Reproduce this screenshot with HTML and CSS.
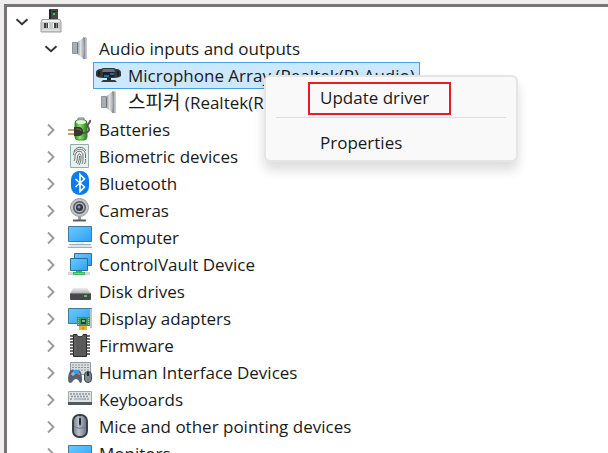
FILE: index.html
```html
<!DOCTYPE html>
<html lang="en">
<head>
<meta charset="utf-8">
<meta name="viewport" content="width=device-width, initial-scale=1">
<title>Device Manager</title>
<link rel="stylesheet" href="styles.css">
</head>
<body>
<svg class="defs" width="0" height="0" aria-hidden="true">
  <defs>
    <linearGradient id="screen" x1="0" y1="0" x2="1" y2="1"><stop offset="0" stop-color="#6cc8ff"/><stop offset=".5" stop-color="#4db6fa"/><stop offset="1" stop-color="#2f9df0"/></linearGradient>
    <linearGradient id="metal"><stop offset="0" stop-color="#8a9096"/><stop offset=".5" stop-color="#dfe2e5"/><stop offset="1" stop-color="#a3a8ad"/></linearGradient>
    <linearGradient id="cell"><stop offset="0" stop-color="#2c8b22"/><stop offset=".4" stop-color="#8be46c"/><stop offset="1" stop-color="#23801b"/></linearGradient>
    <linearGradient id="mousebody"><stop offset="0" stop-color="#737d8a"/><stop offset=".4" stop-color="#b9c2ce"/><stop offset="1" stop-color="#66707d"/></linearGradient>
    <linearGradient id="drivetop" x1="0" y1="0" x2="0" y2="1"><stop offset="0" stop-color="#eeeeef"/><stop offset="1" stop-color="#a9abad"/></linearGradient>
  </defs>
  <symbol id="open" viewBox="0 0 14 8"><path d="M1.500 1.200 7 6.300l5.500-5.100" fill="none" stroke="#333" stroke-width="1.900"/></symbol>
  <symbol id="closed" viewBox="0 0 8 14"><path d="M1 1.500 6.500 7 1 12.500" fill="none" stroke="#9b9b9b" stroke-width="1.900"/></symbol>
  <symbol id="speaker" viewBox="0 0 28 25">
    <path d="M7.500 6.500h5v11h-5z" fill="#a9aeb3" stroke="#90959a"/>
    <path d="M12 6.500 19 1v22.500L12 17.500z" fill="url(#metal)"/>
    <path d="M12.500 7v10.500" stroke="#6f757c" fill="none"/>
    <path d="M18 1.500h3.500v21.500H18c1.500-7 1.500-14.500 0-21.500z" fill="#8d9298"/>
    <path d="M20.500 1.500v21.500" stroke="#b4b9bd"/>
  </symbol>
  <symbol id="monitor" viewBox="0 0 28 25">
    <path d="M3.500 1.500h23v15h-23z" fill="url(#screen)" stroke="#3e7c9f"/>
    <path d="M11 17h8v2h-8z" fill="#e9edf0"/>
    <path d="M5 20h20l2 2H3z" fill="#dce5eb"/><path d="M4 19.500h22M3 22.500h24" stroke="#9db0be"/>
  </symbol>
</svg>

<main class="pane">
  <ul class="tree" aria-label="Devices">
    <li>
      <div class="row">
        <button class="toggle" aria-label="Collapse computer"><svg class="down"><use href="#open"/></svg></button>
        <span class="item"><svg class="icon" viewBox="0 0 28 25">
          <path d="M13 0h9v12h-9z" fill="#444746"/><path d="M13 1h2v11h-2z" fill="#222"/><path d="M16 2.500h5" stroke="#272b29"/><path d="M17 4h2v2h-2z" fill="#43c955"/>
          <path d="M6 10.500h18l1 3v9.500H5v-9.500z" fill="#c9cacb" stroke="#a1a1a1"/><path d="M7 11h16l1 2H6z" fill="#f2f2f2"/><path d="M6 20h18v2H6z" fill="#dedede"/>
          <path d="M8 14h4v5H8zM18 14h4v5h-4z" fill="#3f3f3f"/><path d="M10 14h1v5h-1zM20 14h1v5h-1z" fill="#888"/><path d="M12 14h1v5h-1zM17 14h1v5h-1z" fill="#fff"/>
        </svg></span>
      </div>
      <ul>
        <li>
          <div class="row">
            <button class="toggle" aria-label="Collapse Audio inputs and outputs"><svg class="down"><use href="#open"/></svg></button>
            <span class="item"><svg class="icon"><use href="#speaker"/></svg><span>Audio inputs and outputs</span></span>
          </div>
          <ul>
            <li>
              <div class="row leaf">
                <span class="item selected"><svg class="icon" viewBox="0 0 28 25">
                  <path d="M2 10c0-3 2-4 5-4l2-1h11l2 1c3 0 5 1 5 4v3c-1 1-4 2-7 2H9c-3 0-6-1-7-2z" fill="#34373a"/>
                  <path d="M9 6h11l1 3H8z" fill="#6b7176"/><path d="M9 9h11v5H9z" fill="#14202a"/><path d="M10 13h5m1-2h4" stroke="#168bdc" stroke-width="1.500"/><path d="M5 8v5M24 8v5" stroke="#1d1f21" stroke-width="2"/>
                  <path d="M13 15h4v2h-4z" fill="#24282b"/><path d="M9 17h12l2 2H7z" fill="#35393c"/>
                </svg><span>Microphone Array (Realtek(R) Audio)</span></span>
                <div class="menu" role="menu">
                  <button class="command marked" role="menuitem">Update driver</button>
                  <hr>
                  <button class="command" role="menuitem">Properties</button>
                </div>
              </div>
            </li>
            <li><div class="row leaf"><span class="item"><svg class="icon"><use href="#speaker"/></svg><span><span class="hangul" lang="ko">스피커</span> (Realtek(R) Audio)</span></span></div></li>
          </ul>
        </li>
        <li><div class="row">
          <button class="toggle" aria-label="Expand Batteries"><svg class="right"><use href="#closed"/></svg></button>
          <span class="item"><svg class="icon" viewBox="0 0 28 25">
            <path d="M13 1h6v3h-6z" fill="#c8ccc9" stroke="#7b857b"/><rect x="10" y="3" width="12" height="20" rx="3" fill="url(#cell)" stroke="#3b8a30"/><ellipse cx="16" cy="5" rx="5" ry="2" fill="#e4efe0"/>
            <path d="M17 16c7 0 8-3 6-6s3-4 2-7" fill="none" stroke="#5a5550" stroke-width="2"/>
            <path d="M3 13h7M3 17h7" stroke="#c0a469" stroke-width="2"/><path d="M9 10h4c4 0 5 2 5 5s-2 4-5 4H9z" fill="#393632"/><path d="M11 12c3 0 5 0 5 2" stroke="#77716a" fill="none"/>
          </svg><span>Batteries</span></span>
        </div></li>
        <li><div class="row">
          <button class="toggle" aria-label="Expand Biometric devices"><svg class="right"><use href="#closed"/></svg></button>
          <span class="item"><svg class="icon" viewBox="0 0 28 25">
            <path d="M5.500.5h18v23h-18z" fill="#e8f1ef" stroke="#8fb0a9"/>
            <path d="M9 8c1-6 10-6 12-1M8.500 11c0-7 12-8 12 0v3M9 17c2-3 0-6 2-8 2-3 7-2 7 2 0 5 0 7-1 9M11 19c2-4 1-6 2-8s3-1 3 1c0 4 0 6-2 9M14.500 12c0 4-1 6-2 8M20.500 15c0 2 0 3-1 5" fill="none" stroke="#6a6e6d"/>
          </svg><span>Biometric devices</span></span>
        </div></li>
        <li><div class="row">
          <button class="toggle" aria-label="Expand Bluetooth"><svg class="right"><use href="#closed"/></svg></button>
          <span class="item"><svg class="icon" viewBox="0 0 28 25">
            <rect x="6" width="18" height="24" rx="8.500" fill="#087cf0"/><path d="m10.500 8 9 8-4.500 4.500v-17L19.500 8l-9 8" fill="none" stroke="#fff" stroke-width="1.600"/>
          </svg><span>Bluetooth</span></span>
        </div></li>
        <li><div class="row">
          <button class="toggle" aria-label="Expand Cameras"><svg class="right"><use href="#closed"/></svg></button>
          <span class="item"><svg class="icon" viewBox="0 0 28 25">
            <path d="M13 18h3v4h-3z" fill="#9a9da0"/><path d="M8 22.500h13" stroke="#5d6063" stroke-width="2"/>
            <circle cx="14.500" cy="9.500" r="9" fill="#c3c5c7" stroke="#9b9da0"/><circle cx="14.500" cy="9.500" r="6.500" fill="#55585d"/><circle cx="14.500" cy="9.500" r="5" fill="#b1b7bf"/><circle cx="14.500" cy="9.500" r="3.500" fill="#2c3541"/><circle cx="14" cy="9" r="1.500" fill="#6f9cc8"/>
          </svg><span>Cameras</span></span>
        </div></li>
        <li><div class="row">
          <button class="toggle" aria-label="Expand Computer"><svg class="right"><use href="#closed"/></svg></button>
          <span class="item"><svg class="icon"><use href="#monitor"/></svg><span>Computer</span></span>
        </div></li>
        <li><div class="row">
          <button class="toggle" aria-label="Expand ControlVault Device"><svg class="right"><use href="#closed"/></svg></button>
          <span class="item"><svg class="icon" viewBox="0 0 28 25">
            <path d="M9.500 1.500h17v12h-17z" fill="url(#screen)" stroke="#29719b"/><path d="M5.500 6.500h17v12h-17z" fill="url(#screen)" stroke="#29719b"/>
            <path d="M3 20h22v3H3z" fill="#d3d8d6"/><path d="M11 19h6v1h3v3H8v-3h3z" fill="#3dba55"/><path d="M9 21.500h10" stroke="#6bdc72"/>
          </svg><span>ControlVault Device</span></span>
        </div></li>
        <li><div class="row">
          <button class="toggle" aria-label="Expand Disk drives"><svg class="right"><use href="#closed"/></svg></button>
          <span class="item"><svg class="icon" viewBox="0 0 28 25">
            <path d="M8 9h14l4 6H5z" fill="url(#drivetop)"/><rect x="5" y="14" width="21" height="7" rx="1" fill="#46484a"/><path d="M5 14.500h21" stroke="#777a7c"/><path d="M19 16h3v2h-3z" fill="#42d052"/>
          </svg><span>Disk drives</span></span>
        </div></li>
        <li><div class="row">
          <button class="toggle" aria-label="Expand Display adapters"><svg class="right"><use href="#closed"/></svg></button>
          <span class="item"><svg class="icon" viewBox="0 0 28 25">
            <path d="M3.500 2.500h23v15h-23z" fill="url(#screen)" stroke="#3e7c9f"/><path d="M26 3v19" stroke="#b9c5ca" stroke-width="2"/>
            <path d="M12 11h13v9H12z" fill="#409560"/><path d="M16 13h5v5h-5z" fill="#26433a"/><path d="M17 14h3v2h-3z" fill="#8caf9b"/><path d="M13.500 12v7M23.500 12v7" stroke="#8fcf94" stroke-dasharray="1 1"/>
            <path d="M14 20h8v4h-8z" fill="#f2b02a"/><path d="M18 21v3" stroke="#b97c18"/>
          </svg><span>Display adapters</span></span>
        </div></li>
        <li><div class="row">
          <button class="toggle" aria-label="Expand Firmware"><svg class="right"><use href="#closed"/></svg></button>
          <span class="item"><svg class="icon" viewBox="0 0 28 25">
            <path d="M5 3h4M5 6h4M5 9h4M5 12h4M5 15h4M5 18h4M5 21h4M21 3h4M21 6h4M21 9h4M21 12h4M21 15h4M21 18h4M21 21h4" stroke="#6b6b6b" stroke-width="2"/>
            <path d="M8.500 1.500H12c0 3 6 3 6 0h3.500v22h-13z" fill="#595959" stroke="#2b2b2b"/><path d="M10 4v18" stroke="#6b6b6b"/>
          </svg><span>Firmware</span></span>
        </div></li>
        <li><div class="row">
          <button class="toggle" aria-label="Expand Human Interface Devices"><svg class="right"><use href="#closed"/></svg></button>
          <span class="item"><svg class="icon" viewBox="0 0 28 25">
            <path d="M5.500 2.500h20v12h-20z" fill="#d9dddf" stroke="#929ba0"/><path d="M7 5h17M7 7.500h17M7 10h17" stroke="#8b9499" stroke-dasharray="2 1"/>
            <path d="M5 11c2-2 4-1 5 0s3-1 5 0 3 12 1 12-2-4-5-4-3 4-6 4-2-9 0-12z" fill="#596270"/><path d="M8 10h6v4H8z" fill="#339bea"/><path d="M6 14h4M8 12v4" stroke="#c2c7cc"/><path d="M13 13h2v2h-2z" fill="#e86732"/>
            <rect x="19.500" y="11.500" width="7" height="11" rx="3.500" fill="#7d8793" stroke="#3b434d"/><path d="M23 12v4" stroke="#20262d" stroke-width="2"/>
          </svg><span>Human Interface Devices</span></span>
        </div></li>
        <li><div class="row">
          <button class="toggle" aria-label="Expand Keyboards"><svg class="right"><use href="#closed"/></svg></button>
          <span class="item"><svg class="icon" viewBox="0 0 28 25">
            <path d="M3.500 4.500h23v11h-23z" fill="#dfe3e5" stroke="#a0a9ae"/><path d="M3 15h24v3H3z" fill="#505a60"/><path d="M5 7h20M6 9.500h18M5 12h3m11 0h6" stroke="#8e999f" stroke-width="1.500" stroke-dasharray="2 1"/><path d="M9 12h10" stroke="#8e999f"/>
          </svg><span>Keyboards</span></span>
        </div></li>
        <li><div class="row">
          <button class="toggle" aria-label="Expand Mice and other pointing devices"><svg class="right"><use href="#closed"/></svg></button>
          <span class="item"><svg class="icon" viewBox="0 0 28 25">
            <rect x="8" y="1" width="14" height="22" rx="6" fill="url(#mousebody)" stroke="#3a4048" stroke-width="2"/><path d="M9 12c3 3 9 3 12 0M15 2v10" fill="none" stroke="#6a737f"/><rect x="14" y="4" width="2" height="7" rx="1" fill="#222831"/>
          </svg><span>Mice and other pointing devices</span></span>
        </div></li>
        <li><div class="row">
          <button class="toggle" aria-label="Expand Monitors"><svg class="right"><use href="#closed"/></svg></button>
          <span class="item"><svg class="icon" viewBox="0 0 28 25">
            <path d="M3.500 4.500h23v16h-23z" fill="url(#screen)" stroke="#3e7c9f"/><path d="M8 23h14" stroke="#8aa2b4" stroke-width="2"/>
          </svg><span>Monitors</span></span>
        </div></li>
      </ul>
    </li>
  </ul>
</main>
</body>
</html>
```
FILE: styles.css
```css
* {
  box-sizing: border-box;
}

body {
  margin: 0;
  height: 100vh;
  overflow: hidden;
  padding: 4px 0 0 4px;
  background: #eee;
  color: #1a1a1a;
  font: 17px/24px "Open Sans", "Noto Sans CJK KR", sans-serif;
}

.defs {
  position: absolute;
}

.pane {
  min-height: 100%;
  padding: 1px 0 0 1px;
  border: solid #777475;
  border-width: 3px 0 0 3px;
  background: #fff;
}

.tree,
.tree ul {
  margin: 0;
  padding: 0;
  list-style: none;
}

.tree ul {
  padding-left: 29px;
}

.row {
  position: relative;
  display: flex;
  height: 27px;
}

.leaf {
  padding-left: 27px;
}

.toggle {
  display: grid;
  place-items: center;
  width: 27px;
  padding: 0;
  border: 0;
  background: none;
}

.down {
  width: 14px;
  height: 8px;
}

.right {
  width: 8px;
  height: 14px;
}

.item {
  display: flex;
  align-items: center;
  gap: 6px;
  padding-right: 4px;
  border: 1px solid transparent;
  white-space: nowrap;
}

.selected {
  border-color: #4a9fe0;
  background: #cce8ff;
}

.icon {
  flex: none;
  width: 28px;
  height: 25px;
}

.hangul {
  font-size: 19px;
}

.menu {
  position: absolute;
  z-index: 1;
  top: 13px;
  left: 198px;
  width: 254px;
  padding: 5px 10px 0;
  border: 2px solid #e5e5e5;
  border-radius: 6px;
  background: #f9f9f9;
  box-shadow: 0 8px 12px rgb(0 0 0 / 14%);
}

.menu hr {
  margin: 2px 0 9px;
  border: 0;
  border-top: 1px solid #dfdfdf;
}

.command {
  display: block;
  width: 143px;
  height: 33px;
  margin-left: 32px;
  padding: 0 10px 2px;
  border: 2px solid transparent;
  background: none;
  color: inherit;
  font: inherit;
  text-align: left;
}

.marked {
  border-color: #ec1c24;
}
```
